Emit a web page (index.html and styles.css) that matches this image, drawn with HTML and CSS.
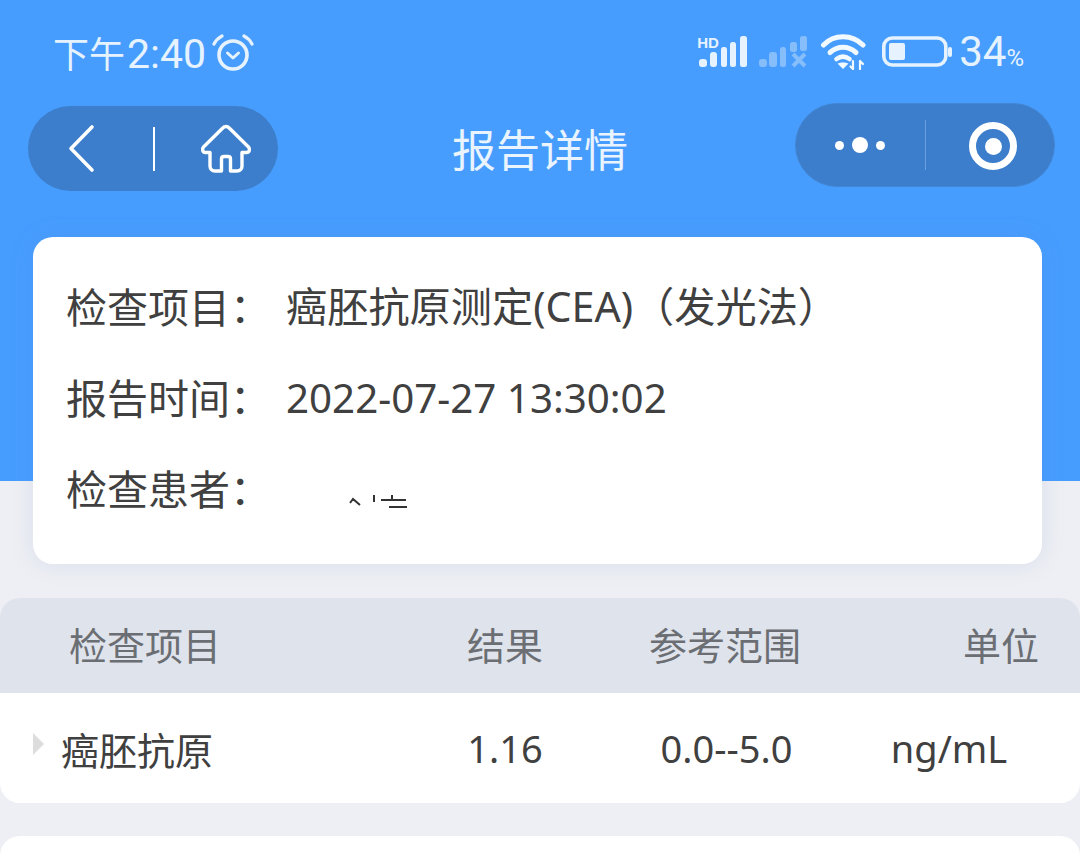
FILE: index.html
```html
<!DOCTYPE html>
<html lang="zh-CN">
    <head>
        <meta charset="utf-8" />
        <title>报告详情</title>
        <link rel="stylesheet" href="styles.css">
    </head>
    <body>
        <div id="page-content">
            <!-- phone status bar -->
            <div class="statusBar">
                <div class="statusLeft">
                    <span class="clock"><span class="clockCn">下午</span>2:40</span>
                    <svg class="alarmIcon" width="42" height="38" viewBox="0 0 42 38" fill="none" stroke="#e6f3ff" stroke-linecap="round" stroke-linejoin="round">
                        <circle cx="21" cy="22" r="14" stroke-width="3.6"/>
                        <path d="M15.500 20l5.500 5 5.500-5" stroke-width="3"/>
                        <path d="M2 11c2-4 4-6 8-8M40 11c-2-4-4-6-8-8" stroke-width="3.200"/>
                    </svg>
                </div>
                <div class="statusRight">
                    <span class="signal">
                        <span class="hd">HD</span>
                        <svg width="50" height="32" viewBox="0 0 50 32" fill="#e6f3ff">
                            <rect x="1" y="23" width="8" height="8" rx="3"/>
                            <rect x="12" y="16" width="7" height="15" rx="3"/>
                            <rect x="23" y="11" width="6" height="20" rx="2.500"/>
                            <rect x="32" y="6" width="6" height="25" rx="2.500"/>
                            <rect x="42" y="0" width="7" height="31" rx="2.500"/>
                        </svg>
                    </span>
                    <svg class="signalOff" width="50" height="32" viewBox="0 0 50 32" fill="#86bdfb">
                        <rect x="1" y="23" width="8" height="8" rx="3"/>
                        <rect x="11" y="16" width="8" height="15" rx="3"/>
                        <rect x="22" y="11" width="6" height="20" rx="2.500"/>
                        <rect x="32" y="6" width="7" height="10" rx="2.500"/>
                        <rect x="42" y="0" width="7" height="15" rx="2.500"/>
                        <path d="M35 18l12 12M47 18L35 30" stroke="#86bdfb" stroke-width="4" fill="none"/>
                    </svg>
                    <svg class="wifiIcon" width="48" height="36" viewBox="0 0 48 36" fill="none" stroke="#f2f9ff" stroke-linecap="round">
                        <path d="M3.500 11C14 0 32 0 43 11" stroke-width="5"/>
                        <path d="M10 18.500c8-7 18-7 26 0" stroke-width="5"/>
                        <path d="M16.500 25c4-3 9-3 13 0" stroke-width="4.600"/>
                        <path d="M17.500 29.500c3-1.500 8-1.500 11 0L23 35z" fill="#f2f9ff" stroke="none"/>
                        <path d="M33 27v8M30.500 32.500l2.500 2.500M40 35v-8M40 27l3 3M33 27" stroke-width="2.200"/>
                    </svg>
                    <svg class="batteryIcon" width="70" height="32" viewBox="0 0 70 32">
                        <rect x="1.800" y="2" width="62" height="27" rx="8.500" fill="none" stroke="#e6f3ff" stroke-width="3.600"/>
                        <rect x="7" y="7" width="16" height="17" rx="2" fill="#e6f3ff"/>
                        <rect x="66" y="11" width="4" height="10" rx="2" fill="#e6f3ff"/>
                    </svg>
                    <span class="battery">34<small>%</small></span>
                </div>
            </div>

            <!-- title bar with the two capsules -->
            <div class="navBar">
                <div class="capsule capsuleLeft">
                    <svg width="30" height="50" viewBox="0 0 30 50" fill="none" stroke="#fff" stroke-width="3.600" stroke-linecap="round" stroke-linejoin="round">
                        <path d="M25 3L4 24.500 25 46"/>
                    </svg>
                    <span class="capsuleLine"></span>
                    <svg width="52" height="50" viewBox="0 0 52 50" fill="none" stroke="#fff" stroke-width="3.400" stroke-linejoin="round" stroke-linecap="round">
                        <path d="M26 2.500c-1.500 0-2.500 .8-3.500 1.800L3.500 23c-2 2.200-.8 5.500 2 5.500H10V42c0 3 2 5 5 5h6.500V35c0-1.600 1-2.500 2.500-2.500h4c1.500 0 2.500 .9 2.500 2.500v12H37c3 0 5-2 5-5V28.500h4.500c2.800 0 4-3.300 2-5.500L29.500 4.300c-1-1-2-1.800-3.500-1.800z"/>
                    </svg>
                </div>
                <h1 class="pageTitle">报告详情</h1>
                <div class="capsule capsuleRight">
                    <span class="dots"><i></i><i class="big"></i><i></i></span>
                    <span class="capsuleLine thin"></span>
                    <span class="targetIcon"><i></i></span>
                </div>
            </div>

            <!-- report info -->
            <div class="infoCard">
                <div class="infoRow"><span class="infoLabel">检查项目：</span><span class="infoItem">癌胚抗原测定(CEA)（发光法）</span></div>
                <div class="infoRow"><span class="infoLabel">报告时间：</span><span class="infoDate">2022-07-27 13:30:02</span></div>
                <div class="infoRow">
                    <span class="infoLabel">检查患者：</span>
                    <svg class="nameScrap" width="60" height="14" viewBox="0 0 60 14" fill="none" stroke="#333" stroke-width="2">
                        <path d="M1 8l3-4 7 6M25 0v7M32 5h25M43 0v5M40 12h18"/>
                    </svg>
                </div>
            </div>

            <!-- result table -->
            <div class="resultTable">
                <div class="tableRow tableHead">
                    <span class="colName">检查项目</span>
                    <span class="colResult">结果</span>
                    <span class="colRange">参考范围</span>
                    <span class="colUnit">单位</span>
                </div>
                <div class="tableRow tableBody">
                    <span class="colName"><i class="arrow"></i>癌胚抗原</span>
                    <span class="colResult">1.16</span>
                    <span class="colRange">0.0--5.0</span>
                    <span class="colUnit">ng/mL</span>
                </div>
            </div>
            <div class="nextCard"></div>
        </div>
    </body>
</html>
```

FILE: styles.css
```css
/* body props */
body {
    margin: 0;
    background-color: #eeeff4;
    font-family: "Noto Sans", "Noto Sans CJK SC", sans-serif;
    color: #333333;
}
#page-content {
    width: 1080px;
    height: 868px;
    overflow: hidden;
    background: linear-gradient(#479dfe 481px, #eeeff4 481px);
}

/* status bar */
.statusBar {
    height: 103px;
    display: flex;
    justify-content: space-between;
    align-items: center;
    padding: 0 56px 0 53px;
    box-sizing: border-box;
}
.statusLeft, .statusRight {
    display: flex;
    align-items: center;
}
.clock {
    font-family: Roboto, "Noto Sans CJK SC", sans-serif;
    font-size: 41px;
    color: #e6f3ff;
}
.clockCn {
    margin-right: 2px;
    font-size: 36px;
}
.alarmIcon {
    margin: 0 0 0 6px;
}
.signal {
    position: relative;
    display: block;
    height: 32px;
}
.hd {
    position: absolute;
    top: -2px;
    left: -1px;
    font: bold 15px "Liberation Sans", sans-serif;
    color: #e6f3ff;
}
.signalOff {
    margin-left: 10px;
}
.wifiIcon {
    margin-left: 12px;
}
.batteryIcon {
    margin-left: 14px;
}
.battery {
    margin-left: 7px;
    font-family: Roboto, sans-serif;
    font-size: 42px;
    color: #e6f3ff;
}
.battery small {
    font-size: 24px;
}

/* title bar */
.navBar {
    position: relative;
    height: 134px;
}
.capsule {
    position: absolute;
    display: flex;
    align-items: center;
    background-color: #3c7ecb;
    border-radius: 44px;
    box-sizing: border-box;
}
.capsuleLeft {
    left: 28px;
    top: 3px;
    width: 250px;
    height: 85px;
    padding-left: 39px;
}
.capsuleRight {
    left: 795px;
    top: 0;
    width: 260px;
    height: 84px;
    border: 1px solid #4286d4;
    padding-left: 39px;
}
.capsuleLine {
    width: 2px;
    height: 44px;
    margin: 0 45px 0 56px;
    background-color: #ffffff;
}
.capsuleLine.thin {
    width: 1px;
    height: 50px;
    margin: 0 43px 0 40px;
    background-color: #6aa0df;
}
.dots {
    display: flex;
    align-items: center;
    gap: 8px;
}
.dots i {
    width: 9px;
    height: 9px;
    border-radius: 50%;
    background-color: #ffffff;
}
.dots i.big {
    width: 16px;
    height: 16px;
}
.targetIcon {
    display: flex;
    align-items: center;
    justify-content: center;
    width: 48px;
    height: 48px;
    margin-top: 2px;
    box-sizing: border-box;
    border: 7px solid #ffffff;
    border-radius: 50%;
}
.targetIcon i {
    width: 17px;
    height: 17px;
    border-radius: 50%;
    background-color: #ffffff;
}
.pageTitle {
    margin: 0;
    padding-top: 16px;
    text-align: center;
    font-size: 44px;
    line-height: 62px;
    font-weight: normal;
    color: #eaf4ff;
}

/* report info */
.infoCard {
    margin: 0 38px 34px 33px;
    height: 327px;
    box-sizing: border-box;
    padding: 22px 33px 0;
    background-color: #ffffff;
    border-radius: 20px;
    box-shadow: 0 0 24px rgba(90, 130, 200, .14);
}
.infoRow {
    display: flex;
    align-items: center;
    height: 91px;
    font-size: 41px;
    color: #404040;
}
.infoLabel {
    width: 220px;
    flex: none;
}
.infoItem {
    margin-bottom: 2px;
    font-size: 41.200px;
}
.infoDate {
    margin-top: 4px;
    font-size: 40.300px;
}
.nameScrap {
    margin: 31px 0 0 63px;
}

/* result table */
.tableRow {
    display: flex;
    align-items: center;
    font-size: 38px;
}
.tableHead {
    height: 95px;
    padding: 0 0 4px 69px;
    box-sizing: border-box;
    background-color: #dfe3ec;
    border-radius: 20px 20px 0 0;
    color: #6b6e73;
}
.tableBody {
    height: 110px;
    padding-left: 61px;
    background-color: #ffffff;
    border-radius: 0 0 20px 20px;
    color: #404040;
}
.colName {
    position: relative;
    flex: none;
}
.tableHead .colName {
    width: 361px;
}
.tableBody .colName {
    width: 369px;
}
.colResult {
    width: 150px;
    text-align: center;
}
.colRange {
    width: 290px;
    text-align: center;
}
.tableBody .colRange {
    padding-left: 3px;
    box-sizing: border-box;
}
.colUnit {
    width: 158px;
    text-align: center;
}
.tableHead .colUnit {
    width: 210px;
    padding-right: 41px;
    box-sizing: border-box;
    text-align: right;
}
.arrow {
    position: absolute;
    left: -28px;
    top: 12px;
    border-left: 11px solid #dddddd;
    border-top: 11px solid transparent;
    border-bottom: 11px solid transparent;
}
.nextCard {
    height: 60px;
    margin-top: 33px;
    background-color: #ffffff;
    border-radius: 20px 20px 0 0;
}
```
